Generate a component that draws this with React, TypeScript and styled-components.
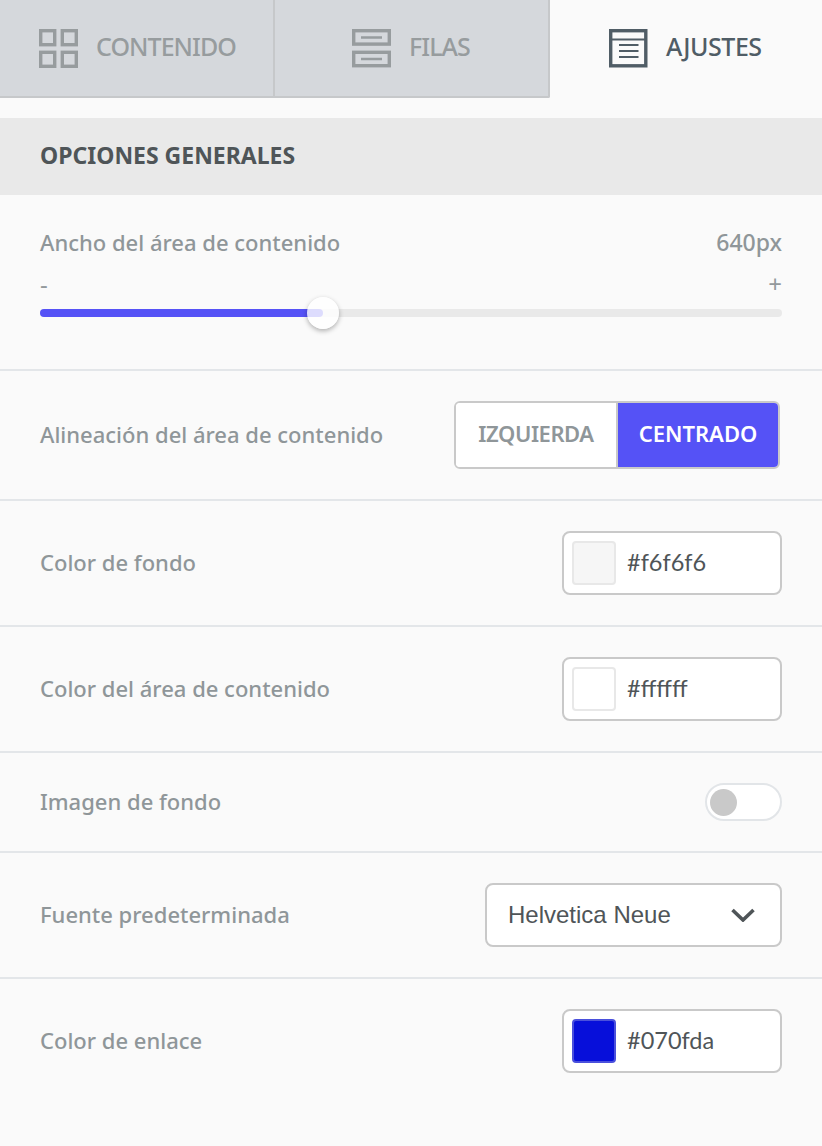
import React from "react";
import styled, { createGlobalStyle } from "styled-components";

const Global = createGlobalStyle`
  html, body { margin: 0; padding: 0; background: #fafafa; }
  * { box-sizing: border-box; }
  body { font-family: "Noto Sans", "Open Sans", sans-serif; }
`;

const Page = styled.div`
  width: 822px;
  height: 1146px;
  background: #fafafa;
  overflow: hidden;
`;

const Tabs = styled.div`
  display: flex;
  height: 98px;
`;

const Tab = styled.div<{ $active?: boolean; $width: number; $last?: boolean; $pad: number }>`
  width: ${(p) => p.$width}px;
  display: flex;
  align-items: center;
  gap: 18px;
  padding-left: ${(p) => p.$pad}px;
  padding-top: ${(p) => (p.$active ? "0" : "1px")};
  font-size: 25px;
  font-weight: 500;
  letter-spacing: ${(p) => (p.$active ? "-0.45px" : "-0.95px")};
  color: ${(p) => (p.$active ? "#505d66" : "#979c9e")};
  background: ${(p) => (p.$active ? "#fafafa" : "#d5d8dc")};
  border-bottom: ${(p) => (p.$active ? "none" : "2px solid #c6c8ca")};
  border-right: ${(p) => (p.$active ? "none" : "2px solid #c6c8ca")};
  border-bottom-right-radius: ${(p) => (p.$last ? "2px" : "0")};
`;

const TabText = styled.span`
  margin-bottom: 6px;
`;

const TabIcon = styled.svg`
  display: block;
  flex: none;
  width: 39px;
  height: 39px;
  margin-bottom: 1px;
`;

const SectionHeader = styled.h2`
  margin: 20px 0 0;
  height: 77px;
  padding-left: 40px;
  padding-bottom: 3px;
  display: flex;
  align-items: center;
  background: #e9e9e9;
  color: #4f5558;
  font-size: 23px;
  font-weight: 700;
`;

const Row = styled.div<{ $height: number; $last?: boolean }>`
  height: ${(p) => p.$height}px;
  padding: 0 40px;
  display: flex;
  align-items: center;
  justify-content: space-between;
  border-bottom: 2px solid ${(p) => (p.$last ? "transparent" : "#e3e6e9")};
`;

const Label = styled.span`
  padding-bottom: 2px;
  font-size: 22px;
  font-weight: 500;
  color: #8f9699;
`;

const SliderRow = styled.div`
  height: 176px;
  padding: 32px 40px 0;
  border-bottom: 2px solid #e3e6e9;
`;

const SliderHead = styled.div`
  display: flex;
  justify-content: space-between;
  align-items: center;
  height: 32px;
`;

const Value = styled(Label)`
  font-size: 23px;
`;

const Ends = styled.div`
  display: flex;
  justify-content: space-between;
  margin-top: 11px;
  height: 28px;
  font-size: 24px;
  line-height: 28px;
  color: #93999c;
`;

const Track = styled.div`
  position: relative;
  margin-top: 11px;
  height: 8px;
  border-radius: 4px;
  background: #e9e9e9;
`;

const Fill = styled.div`
  height: 100%;
  border-radius: 4px;
  background: #5552f6;
`;

const Thumb = styled.div`
  position: absolute;
  top: -12px;
  width: 32px;
  height: 32px;
  border-radius: 50%;
  background: rgba(255, 255, 255, 0.8);
  box-shadow: 0 2px 5px rgba(0, 0, 0, 0.3);
`;

const Segmented = styled.div`
  display: flex;
  width: 326px;
  height: 68px;
  margin-right: 2px;
  border: 2px solid #c9c9c9;
  border-radius: 6px;
  overflow: hidden;
  background: #fff;
`;

const Segment = styled.div<{ $active?: boolean; $width: number }>`
  width: ${(p) => p.$width}px;
  display: flex;
  align-items: center;
  justify-content: center;
  padding-bottom: 4px;
  font-size: 22px;
  font-weight: 600;
  letter-spacing: ${(p) => (p.$active ? "0" : "-0.45px")};
  color: ${(p) => (p.$active ? "#fff" : "#8f9699")};
  background: ${(p) => (p.$active ? "#5552f6" : "#fff")};
  border-left: ${(p) => (p.$active ? "2px solid #c9c9c9" : "none")};
`;

const ColorField = styled.div`
  width: 220px;
  height: 64px;
  padding-left: 8px;
  display: flex;
  align-items: center;
  gap: 11px;
  background: #fff;
  border: 2px solid #c9c9c9;
  border-radius: 8px;
  font-family: Lato, "Noto Sans", sans-serif;
  font-size: 23.5px;
  color: #4f5558;
`;

const HexText = styled.span`
  margin-bottom: 2px;
`;

const Swatch = styled.div<{ $color: string; $border: string }>`
  width: 44px;
  height: 44px;
  background: ${(p) => p.$color};
  border: 2px solid ${(p) => p.$border};
  border-radius: 4px;
`;

const Toggle = styled.div`
  width: 77px;
  height: 38px;
  padding-left: 3px;
  display: flex;
  align-items: center;
  background: #fff;
  border: 2px solid #e2e5e8;
  border-radius: 19px;
`;

const Knob = styled.div`
  width: 27px;
  height: 27px;
  border-radius: 50%;
  background: #c9c9c9;
`;

const Select = styled.div`
  width: 297px;
  height: 64px;
  padding: 0 25px 0 21px;
  display: flex;
  align-items: center;
  justify-content: space-between;
  background: #fff;
  border: 2px solid #c9c9c9;
  border-radius: 8px;
  font-family: "Liberation Sans", Arial, sans-serif;
  font-size: 24px;
  color: #4f5558;
`;

const GridIcon = () => (
  <TabIcon viewBox="0 0 39 39" fill="none" stroke="#979c9e" strokeWidth="3.4">
    <rect x="1.700" y="1.700" width="14" height="14" />
    <rect x="23.300" y="1.700" width="14" height="14" />
    <rect x="1.700" y="23.300" width="14" height="14" />
    <rect x="23.300" y="23.300" width="14" height="14" />
  </TabIcon>
);

const RowsIcon = () => (
  <TabIcon viewBox="0 0 39 39" fill="none" stroke="#979c9e">
    <rect x="1.700" y="1.700" width="35.600" height="13.400" strokeWidth="3.4" />
    <rect x="1.700" y="23.300" width="35.600" height="13.400" strokeWidth="3.4" />
    <path d="M9 8.500h21M9 30h21" strokeWidth="2.600" />
  </TabIcon>
);

const SettingsIcon = () => (
  <TabIcon viewBox="0 0 39 39" fill="none" stroke="#505d66">
    <rect x="1.700" y="1.700" width="35.100" height="35.100" strokeWidth="3.4" />
    <path d="M3 10.500h33" strokeWidth="2" />
    <path d="M10 16h19.500M10 22h19.500M10 28h19.500" strokeWidth="2" />
  </TabIcon>
);

const Chevron = () => (
  <svg width="24" height="14" viewBox="0 0 24 14" fill="none" stroke="#4f5558" strokeWidth="3.600">
    <path d="M1.500 2l10.500 10L22.500 2" />
  </svg>
);

const colorRows = [
  { label: "Color de fondo", value: "#f6f6f6", swatch: "#f6f6f6", border: "#e8e8e8" },
  { label: "Color del área de contenido", value: "#ffffff", swatch: "#ffffff", border: "#e8e8e8" },
];

export default function App() {
  return (
    <Page>
      <Global />
      <Tabs>
        <Tab $width={275} $pad={39}><GridIcon /><TabText>CONTENIDO</TabText></Tab>
        <Tab $width={275} $pad={77} $last><RowsIcon /><TabText>FILAS</TabText></Tab>
        <Tab $width={272} $pad={59} $active><SettingsIcon /><TabText>AJUSTES</TabText></Tab>
      </Tabs>
      <SectionHeader>OPCIONES GENERALES</SectionHeader>
      <SliderRow>
        <SliderHead>
          <Label>Ancho del área de contenido</Label>
          <Value>640px</Value>
        </SliderHead>
        <Ends><span>-</span><span>+</span></Ends>
        <Track>
          <Fill style={{ width: `${(283 / 742) * 100}%` }} />
          <Thumb style={{ left: 267 }} />
        </Track>
      </SliderRow>
      <Row $height={130}>
        <Label>Alineación del área de contenido</Label>
        <Segmented>
          <Segment $width={160}>IZQUIERDA</Segment>
          <Segment $width={162} $active>CENTRADO</Segment>
        </Segmented>
      </Row>
      {colorRows.map((r) => (
        <Row $height={126} key={r.value}>
          <Label>{r.label}</Label>
          <ColorField><Swatch $color={r.swatch} $border={r.border} /><HexText>{r.value}</HexText></ColorField>
        </Row>
      ))}
      <Row $height={100}>
        <Label>Imagen de fondo</Label>
        <Toggle><Knob /></Toggle>
      </Row>
      <Row $height={126}>
        <Label>Fuente predeterminada</Label>
        <Select>Helvetica Neue<Chevron /></Select>
      </Row>
      <Row $height={126} $last>
        <Label>Color de enlace</Label>
        <ColorField><Swatch $color="#070fda" $border="#4a50dc" /><HexText>#070fda</HexText></ColorField>
      </Row>
    </Page>
  );
}
